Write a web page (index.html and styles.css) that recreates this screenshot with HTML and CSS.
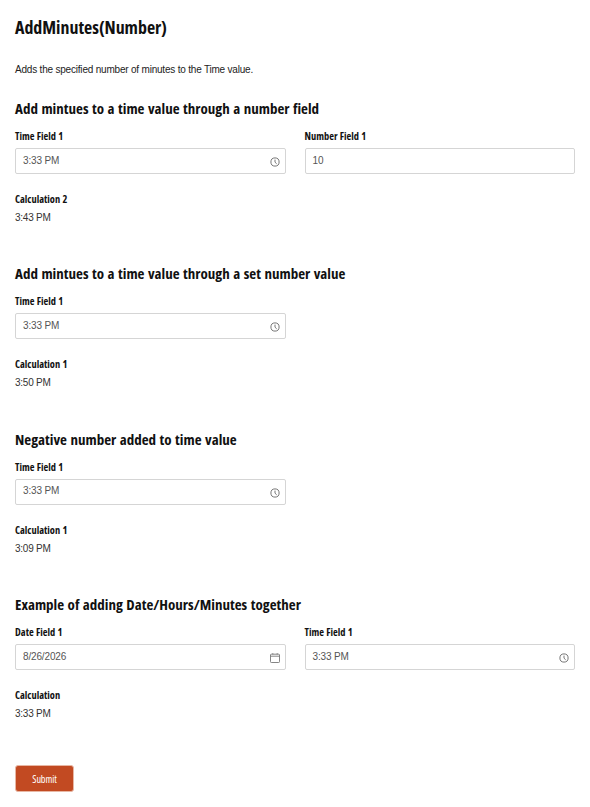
FILE: index.html
```html
<!DOCTYPE html>
<html lang="en">
<head>
<meta charset="utf-8">
<title>AddMinutes(Number)</title>
<link rel="stylesheet" href="styles.css">
</head>
<body>
<svg class="sprite" width="0" height="0" aria-hidden="true">
  <symbol id="clock" viewBox="0 0 10 10"><circle cx="5" cy="5" r="4.1" fill="none" stroke="currentColor" stroke-width="1"/><path d="M5 2.6V5.2L6.7 6.8" fill="none" stroke="currentColor" stroke-width="1"/></symbol>
  <symbol id="cal" viewBox="0 0 10 10"><rect x=".5" y="1.2" width="9" height="8.300" rx=".8" fill="none" stroke="currentColor" stroke-width=".9"/><path d="M.5 3.200H9.500M2.800 .2V1.400M7.200 .2V1.400" fill="none" stroke="currentColor" stroke-width=".9"/></symbol>
</svg>
<main class="page">
  <h1 class="title">AddMinutes(Number)</h1>
  <p class="intro">Adds the specified number of minutes to the Time value.</p>

  <section class="section">
    <h2 class="heading">Add mintues to a time value through a number field</h2>
    <div class="row">
      <div class="field"><div class="label">Time Field 1</div><div class="input"><span>3:33 PM</span><svg class="icon"><use href="#clock"/></svg></div></div>
      <div class="field"><div class="label">Number Field 1</div><div class="input"><span>10</span></div></div>
    </div>
    <div class="calc"><div class="label">Calculation 2</div><div class="value">3:43 PM</div></div>
  </section>

  <section class="section">
    <h2 class="heading">Add mintues to a time value through a set number value</h2>
    <div class="row">
      <div class="field"><div class="label">Time Field 1</div><div class="input"><span>3:33 PM</span><svg class="icon"><use href="#clock"/></svg></div></div>
      <div class="field"></div>
    </div>
    <div class="calc"><div class="label">Calculation 1</div><div class="value">3:50 PM</div></div>
  </section>

  <section class="section">
    <h2 class="heading">Negative number added to time value</h2>
    <div class="row">
      <div class="field"><div class="label">Time Field 1</div><div class="input"><span>3:33 PM</span><svg class="icon"><use href="#clock"/></svg></div></div>
      <div class="field"></div>
    </div>
    <div class="calc"><div class="label">Calculation 1</div><div class="value">3:09 PM</div></div>
  </section>

  <section class="section">
    <h2 class="heading">Example of adding Date/Hours/Minutes together</h2>
    <div class="row">
      <div class="field"><div class="label">Date Field 1</div><div class="input"><span>8/26/2026</span><svg class="icon"><use href="#cal"/></svg></div></div>
      <div class="field"><div class="label">Time Field 1</div><div class="input"><span>3:33 PM</span><svg class="icon"><use href="#clock"/></svg></div></div>
    </div>
    <div class="calc"><div class="label">Calculation</div><div class="value">3:33 PM</div></div>
  </section>

  <button class="submit" type="button">Submit</button>
</main>
</body>
</html>
```
FILE: styles.css
```css
* { box-sizing: border-box; }
html, body { margin: 0; padding: 0; background: #fff; }
body { font-family: "Liberation Sans", Arial, sans-serif; color: #222; overflow: hidden; }
.sprite { position: absolute; }
.page { padding: 0 15px; width: 590px; height: 807px; }
.title, .heading, .label, .submit { font-family: "Open Sans", sans-serif; font-stretch: 75%; }
.title { margin: 0; padding-top: 16px; font-size: 17.9px; line-height: 23px; font-weight: 700; color: #111; }
.intro { margin: 0; padding-top: 24px; font-size: 10px; line-height: 13px; letter-spacing: -0.2px; color: #222; }
.section { height: 165.4px; }
.page > .intro + .section { margin-top: 22px; }
.heading { margin: 0; font-size: 15px; line-height: 20px; word-spacing: 0.8px; font-weight: 700; color: #111; }
.row { display: grid; grid-template-columns: 270.75px 270.75px; column-gap: 18.75px; margin-top: 11px; }
.label { font-size: 10.4px; line-height: 15px; word-spacing: 0.4px; font-weight: 700; color: #111; }
.input { display: flex; align-items: center; justify-content: space-between; height: 26px; margin-top: 4px; padding: 0 5px 0 7px; background: #fff; border: 1px solid #d5d5d5; border-radius: 2px; font-size: 10px; letter-spacing: -0.15px; color: #555; }
.input span { position: relative; top: -1px; }
.icon { width: 10px; height: 10px; color: #777; position: relative; top: 1px; }
.calc { margin-top: 18px; }
.value { margin-top: 3px; font-size: 10px; line-height: 15px; letter-spacing: -0.25px; color: #333; }
.submit { display: block; width: 59px; height: 27px; margin-top: 5.4px; padding: 1px 0 0; background: #c24a22; border: 1px solid #e8b7a4; border-radius: 3px; color: #fff; font-size: 10.2px; letter-spacing: -0.1px; font-weight: 400; }
```
